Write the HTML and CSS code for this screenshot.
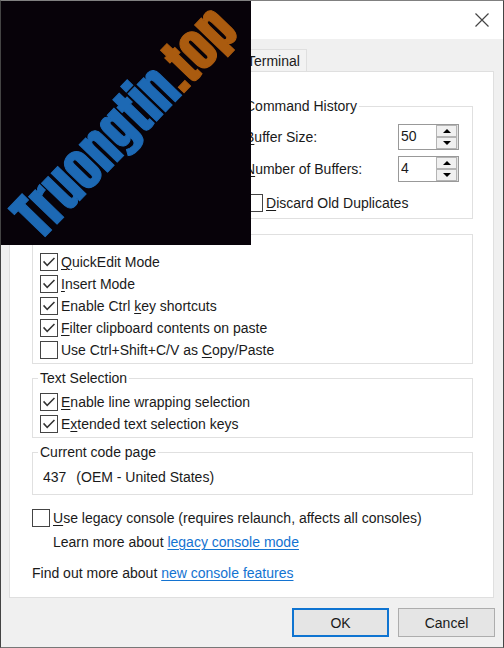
FILE: index.html
```html
<!DOCTYPE html>
<html lang="en">
<head>
<meta charset="utf-8">
<title>Console Properties</title>
<link rel="stylesheet" href="styles.css">
</head>
<body>
<main class="dialog">
  <header class="titlebar">
    <button class="close" type="button" aria-label="Close">
      <svg width="14" height="14" viewBox="0 0 14 14"><path d="M.5 .5 13.5 13.5M13.5 .5 .5 13.5" fill="none" stroke="#444" stroke-width="1.2"/></svg>
    </button>
  </header>

  <nav class="tabs"><button class="tab" type="button">Terminal</button></nav>

  <form class="panel" id="options">
    <fieldset class="group history">
      <legend>Command History</legend>
      <div class="field">
        <label for="size"><u>B</u>uffer Size:</label>
        <div class="spin">
          <input id="size" type="text" value="50">
          <div class="arrows">
            <button type="button" aria-label="Increase"><svg width="8" height="4" viewBox="0 0 8 4"><path d="M4 0 8 4H0z"/></svg></button>
            <button type="button" aria-label="Decrease"><svg width="8" height="4" viewBox="0 0 8 4"><path d="M0 0H8L4 4z"/></svg></button>
          </div>
        </div>
      </div>
      <div class="field">
        <label for="count"><u>N</u>umber of Buffers:</label>
        <div class="spin">
          <input id="count" type="text" value="4">
          <div class="arrows">
            <button type="button" aria-label="Increase"><svg width="8" height="4" viewBox="0 0 8 4"><path d="M4 0 8 4H0z"/></svg></button>
            <button type="button" aria-label="Decrease"><svg width="8" height="4" viewBox="0 0 8 4"><path d="M0 0H8L4 4z"/></svg></button>
          </div>
        </div>
      </div>
      <label class="check discard"><input type="checkbox"><span><u>D</u>iscard Old Duplicates</span></label>
    </fieldset>

    <fieldset class="group edit">
      <label class="check"><input type="checkbox" checked><span><u>Q</u>uickEdit Mode</span></label>
      <label class="check"><input type="checkbox" checked><span><u>I</u>nsert Mode</span></label>
      <label class="check"><input type="checkbox" checked><span>Enable Ctrl <u>k</u>ey shortcuts</span></label>
      <label class="check"><input type="checkbox" checked><span><u>F</u>ilter clipboard contents on paste</span></label>
      <label class="check"><input type="checkbox"><span>Use Ctrl+Shift+C/V as <u>C</u>opy/Paste</span></label>
    </fieldset>

    <fieldset class="group selection">
      <legend>Text Selection</legend>
      <label class="check"><input type="checkbox" checked><span><u>E</u>nable line wrapping selection</span></label>
      <label class="check"><input type="checkbox" checked><span>E<u>x</u>tended text selection keys</span></label>
    </fieldset>

    <fieldset class="group codepage">
      <legend>Current code page</legend>
      <p class="codes"><span>437</span><span>(OEM - United States)</span></p>
    </fieldset>

    <label class="check legacy"><input type="checkbox"><span><u>U</u>se legacy console (requires relaunch, affects all consoles)</span></label>
    <p class="learn">Learn more about <a href="#legacy">legacy console mode</a></p>
    <p class="find">Find out more about <a href="#features">new console features</a></p>
  </form>

  <footer class="actions">
    <button class="btn primary" type="submit" form="options">OK</button>
    <button class="btn" type="button">Cancel</button>
  </footer>

  <div class="stamp"><div class="brand">Truongtin<span>.top</span></div></div>
</main>
</body>
</html>
```
FILE: styles.css
```css
* { box-sizing: border-box; }

body {
  margin: 0;
  font: 14px/22px "Liberation Sans", Arial, sans-serif;
  color: #1a1a1a;
}

button, input { font: inherit; color: inherit; }
p { margin: 0; }
u { text-underline-offset: 2px; text-decoration-thickness: 1px; }

.dialog {
  position: relative;
  min-height: 100vh;
  background: #f0f0f0;
  border: 1px solid #444;
  border-top-color: #808080;
  border-bottom-color: #777;
}

.titlebar {
  display: flex;
  justify-content: flex-end;
  align-items: center;
  height: 38px;
  padding-right: 8px;
  background: #fff;
}

.close {
  display: grid;
  place-items: center;
  width: 26px;
  height: 26px;
  padding: 0;
  border: 0;
  background: none;
}

.tabs { display: flex; padding: 10px 0 0 239px; }

.tab {
  height: 22px;
  padding: 0 6px;
  border: 1px solid #dfdfdf;
  border-bottom: 0;
  background: #f2f2f2;
  line-height: 22px;
}

.panel {
  margin: 0 9px 0 8px;
  padding: 25px 20px 13px 22px;
  border: 1px solid #dfdfdf;
  background: #fff;
}

.group {
  min-width: 0;
  margin: 0;
  padding: 0 13px 2px 7px;
  border: 1px solid #e0e0e0;
}

.group legend {
  margin-left: -2px;
  padding: 0 2px;
  line-height: 18px;
}

.history { margin-left: 205px; padding-bottom: 4px; }
.history legend { margin-bottom: 6px; }

.field {
  display: flex;
  align-items: center;
  justify-content: space-between;
  height: 32px;
}

.spin {
  display: flex;
  width: 61px;
  height: 26px;
  border: 1px solid #999;
  background: #fff;
}

.spin input {
  flex: 1;
  min-width: 0;
  padding: 0 2px 3px;
  border: 0;
  outline: 0;
  background: none;
}

.arrows {
  display: grid;
  grid-template-rows: 1fr 1fr;
  width: 22px;
  padding-right: 1px;
  background: #e4e4e4;
}

.arrows button {
  display: grid;
  place-items: center;
  padding: 0;
  border: 1px solid #b4b4b4;
  background: #f0f0f0;
}

.check {
  display: flex;
  align-items: center;
  gap: 3px;
  height: 22px;
}

.check input {
  appearance: none;
  display: grid;
  place-items: center;
  width: 18px;
  height: 18px;
  margin: 0;
  border: 1px solid #444;
  background: #fff;
}

.check input:checked::before {
  content: "";
  width: 12px;
  height: 10px;
  background: #333;
  clip-path: polygon(0 49%, 9% 37%, 35% 72%, 91% 5%, 100% 16%, 35% 94%);
}

.discard { margin-top: 7px; }
.edit { margin-top: 15px; padding-top: 16px; }
.selection { margin-top: 5px; }
.selection legend { margin-bottom: 4px; }
.codepage { margin-top: 5px; padding-bottom: 6px; }
.codepage legend { margin-bottom: 5px; }
.codes { display: flex; gap: 10px; padding-left: 3px; }

.legacy { margin-top: 12px; }
.learn { margin-top: 2px; padding-left: 21px; }
.find { margin-top: 9px; }

a {
  color: #1373d1;
  text-underline-offset: 2px;
  text-decoration-thickness: 1px;
}

.actions {
  display: flex;
  justify-content: flex-end;
  gap: 9px;
  padding: 10px 8px;
}

.btn {
  width: 97px;
  height: 29px;
  padding: 0;
  border: 1px solid #adadad;
  background: #e5e5e5;
}

.primary { border: 2px solid #0f74d1; }

.stamp {
  position: absolute;
  top: 0;
  left: 0;
  display: flex;
  align-items: center;
  justify-content: center;
  width: 250px;
  height: 244px;
  background: #070209;
}

.brand {
  flex: none;
  padding-bottom: 4px;
  font: 54px/72px Impact, Anton, "Roboto Condensed", "Open Sans Condensed", "Liberation Sans", sans-serif;
  color: #1d69b4;
  white-space: nowrap;
  -webkit-text-stroke: 1px currentColor;
  transform: rotate(-46deg);
}

.brand span { color: #aa5b0f; }
```
